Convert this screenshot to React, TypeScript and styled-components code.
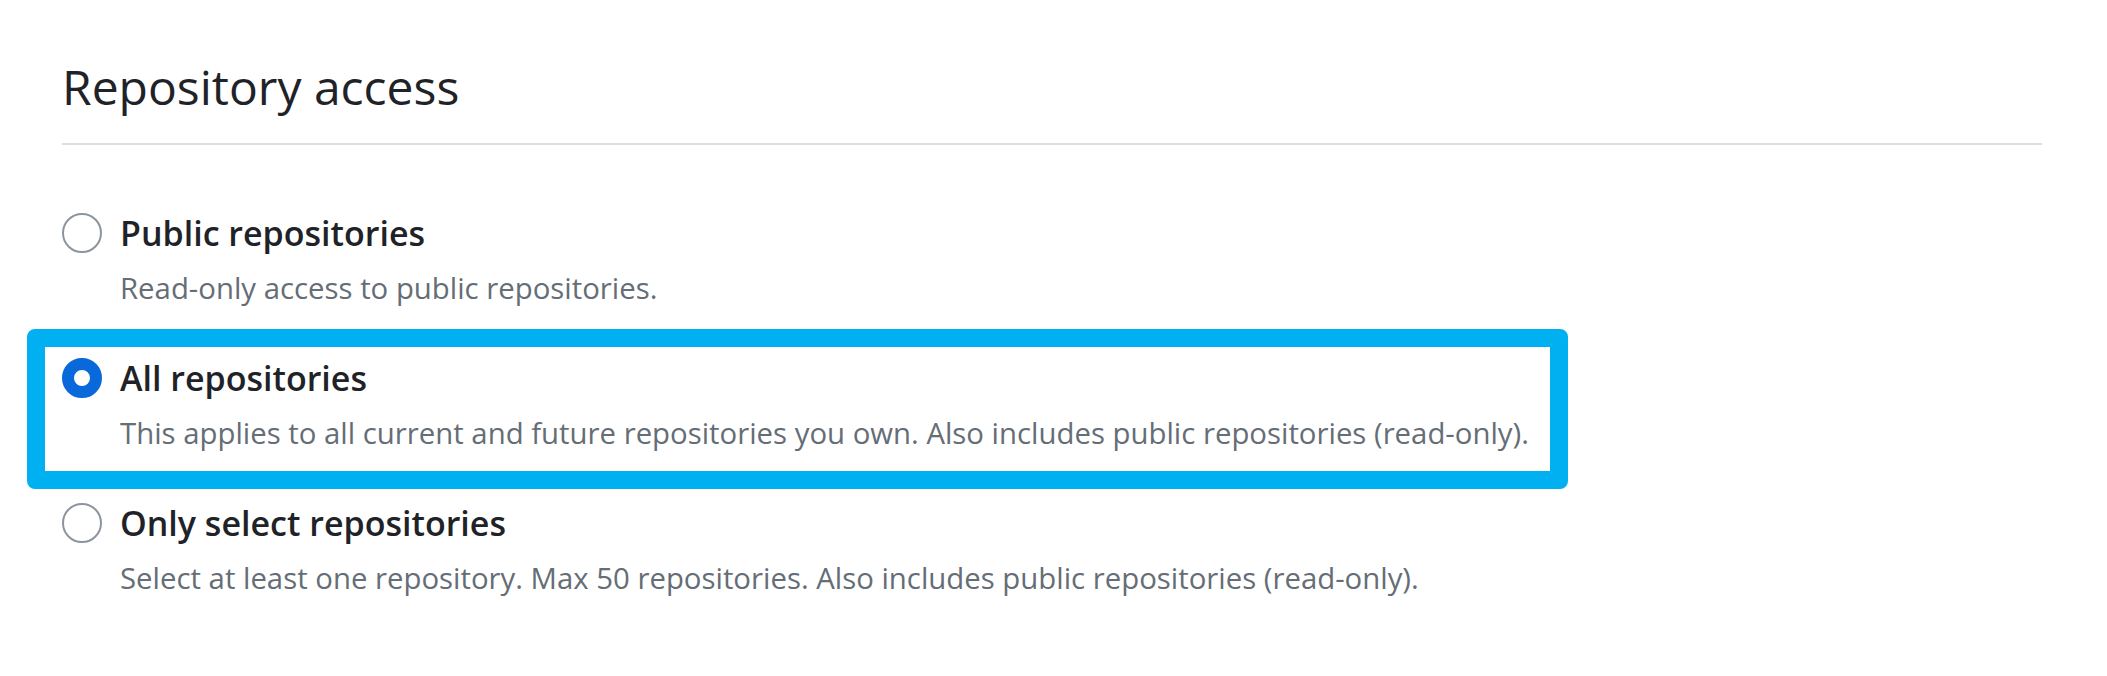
import styled, { createGlobalStyle, css } from "styled-components";

const GlobalStyle = createGlobalStyle`
  body {
    margin: 0;
    background: #ffffff;
    font-family: "Open Sans", "Noto Sans", sans-serif;
    color: #1f2328;
  }
`;

const Page = styled.div`
  padding: 57px 0 0 62px;
`;

const Section = styled.section`
  width: 1980px;
`;

// HEADER
const Subhead = styled.div`
  padding-bottom: 26px;
  margin-bottom: 66px;
  border-bottom: 2px solid #d8dee4;
`;

const Heading = styled.h2`
  margin: 0;
  font-size: 48px;
  font-weight: 400;
  line-height: 60px;
  color: #1f2328;
`;

// OPTIONS
const OptionList = styled.div`
  display: flex;
  flex-direction: column;
  gap: 48px;
`;

const Option = styled.label<{ $highlight?: boolean }>`
  display: flex;
  align-items: flex-start;
  gap: 18px;
  cursor: pointer;

  ${(p) =>
    p.$highlight &&
    css`
      position: relative;

      /* annotation frame drawn over the screenshot */
      &::after {
        content: "";
        position: absolute;
        left: -35px;
        top: -27px;
        width: 1541px;
        height: 160px;
        box-sizing: border-box;
        border: 18px solid #00b0f0;
        border-radius: 8px;
        pointer-events: none;
      }
    `}
`;

const Radio = styled.span<{ $checked?: boolean }>`
  flex-shrink: 0;
  width: 40px;
  height: 40px;
  margin-top: 2px;
  box-sizing: border-box;
  border-radius: 50%;
  background: #ffffff;
  border: ${(p) => (p.$checked ? "12px solid #0969da" : "2px solid #8c959f")};
`;

const Text = styled.div`
  display: flex;
  flex-direction: column;
`;

const Label = styled.span`
  font-size: 34px;
  font-weight: 600;
  line-height: 44px;
  color: #1f2328;
`;

const Note = styled.span`
  margin-top: 13px;
  font-size: 29.35px;
  line-height: 40px;
  color: #656d76;
`;

const options = [
  {
    label: "Public repositories",
    note: "Read-only access to public repositories.",
  },
  {
    label: "All repositories",
    note: "This applies to all current and future repositories you own. Also includes public repositories (read-only).",
    checked: true,
  },
  {
    label: "Only select repositories",
    note: "Select at least one repository. Max 50 repositories. Also includes public repositories (read-only).",
  },
];

const App = () => {
  return (
    <>
      <GlobalStyle />
      <Page>
        <Section>
          <Subhead>
            <Heading>Repository access</Heading>
          </Subhead>
          <OptionList>
            {options.map((o) => (
              <Option key={o.label} $highlight={o.checked}>
                <Radio $checked={o.checked} />
                <Text>
                  <Label>{o.label}</Label>
                  <Note>{o.note}</Note>
                </Text>
              </Option>
            ))}
          </OptionList>
        </Section>
      </Page>
    </>
  );
};

export default App;
